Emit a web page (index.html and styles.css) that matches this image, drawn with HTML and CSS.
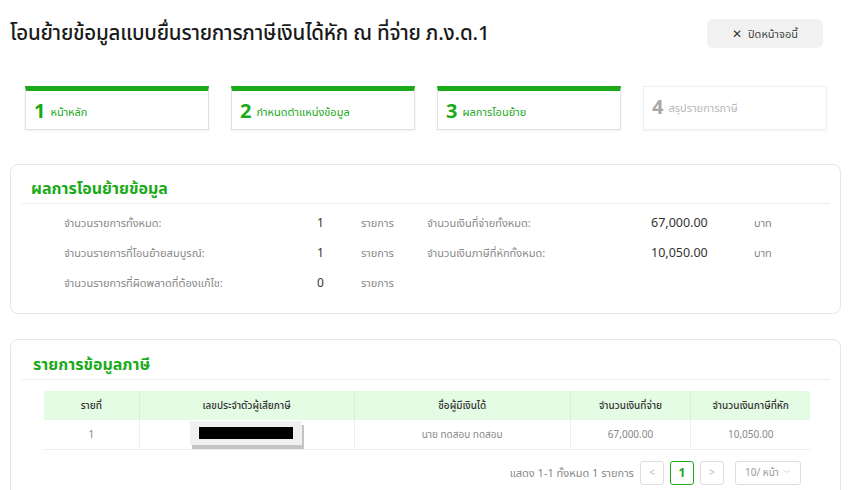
FILE: index.html
```html
<!DOCTYPE html>
<html lang="th">
<head>
    <meta charset="UTF-8">
    <title>โอนย้ายข้อมูล ภ.ง.ด.1</title>
    <link rel="stylesheet" href="styles.css">
</head>
<body>
    <div class="header">
        <h1>โอนย้ายข้อมูลแบบยื่นรายการภาษีเงินได้หัก ณ ที่จ่าย ภ.ง.ด.1</h1>
        <button class="close-btn"><span class="x">✕</span> ปิดหน้าจอนี้</button>
    </div>

    <div class="steps">
        <div class="step done"><span class="num">1</span> หน้าหลัก</div>
        <div class="step done"><span class="num">2</span> กำหนดตำแหน่งข้อมูล</div>
        <div class="step done"><span class="num">3</span> ผลการโอนย้าย</div>
        <div class="step"><span class="num">4</span> สรุปรายการภาษี</div>
    </div>

    <div class="panel">
        <h2>ผลการโอนย้ายข้อมูล</h2>
        <div class="summary">
            <span class="lbl">จำนวนรายการทั้งหมด:</span><span class="val">1</span><span class="unit">รายการ</span>
            <span class="lbl">จำนวนเงินที่จ่ายทั้งหมด:</span><span class="val money">67,000.00</span><span class="unit">บาท</span>

            <span class="lbl">จำนวนรายการที่โอนย้ายสมบูรณ์:</span><span class="val">1</span><span class="unit">รายการ</span>
            <span class="lbl">จำนวนเงินภาษีที่หักทั้งหมด:</span><span class="val money">10,050.00</span><span class="unit">บาท</span>

            <span class="lbl">จำนวนรายการที่ผิดพลาดที่ต้องแก้ไข:</span><span class="val">0</span><span class="unit">รายการ</span>
            <span></span><span></span><span></span>
        </div>
    </div>

    <div class="panel panel-list">
        <h2>รายการข้อมูลภาษี</h2>
        <table class="tax-table">
            <thead>
                <tr>
                    <th class="c1">รายที่</th>
                    <th class="c2">เลขประจำตัวผู้เสียภาษี</th>
                    <th class="c3">ชื่อผู้มีเงินได้</th>
                    <th class="c4">จำนวนเงินที่จ่าย</th>
                    <th class="c5">จำนวนเงินภาษีที่หัก</th>
                </tr>
            </thead>
            <tbody>
                <tr>
                    <td>1</td>
                    <td class="tax-id"><span class="redact"><span class="bar"></span></span></td>
                    <td>นาย ทดสอบ ทดสอบ</td>
                    <td>67,000.00</td>
                    <td>10,050.00</td>
                </tr>
            </tbody>
        </table>
        <div class="pager">
            <span class="pager-info">แสดง 1-1 ทั้งหมด 1 รายการ</span>
            <span class="pg">&lt;</span>
            <span class="pg active">1</span>
            <span class="pg">&gt;</span>
            <span class="page-size">10/ หน้า <span class="caret">﹀</span></span>
        </div>
    </div>
</body>
</html>
```

FILE: styles.css
```css
body {
    margin: 0;
    background-color: #fff;
    font-family: "Noto Sans Thai", "Noto Sans Thai Looped", "Noto Sans", "DejaVu Sans", sans-serif;
    color: #333;
    width: 852px;
    height: 490px;
    overflow: hidden;
}
.header {
    display: flex;
    align-items: center;
    justify-content: space-between;
    padding: 19px 29px 0 10px;
    height: 29px;
}
.header h1 {
    margin: 0;
    font-size: 20.5px;
    font-weight: 500;
    color: #1a1a1a;
    letter-spacing: -0.2px;
    line-height: 29px;
}
.close-btn {
    width: 116px;
    height: 29px;
    border: none;
    border-radius: 6px;
    background-color: #f1f1f1;
    color: #444;
    font-family: inherit;
    font-size: 11px;
    cursor: pointer;
}
.close-btn .x {
    font-weight: bold;
    font-size: 12px;
    margin-right: 3px;
    color: #333;
}
.steps {
    display: grid;
    grid-template-columns: repeat(4, 184px);
    gap: 22px;
    margin: 38px 0 0 25px;
}
.step {
    height: 44px;
    box-sizing: border-box;
    border: 1px solid #f0f0f0;
    box-shadow: 0 1px 2px rgba(0,0,0,0.06);
    display: flex;
    align-items: center;
    padding: 0 0 0 8px;
    font-size: 11px;
    color: #b8b8b8;
}
.step .num {
    font-size: 20px;
    font-weight: bold;
    margin-right: 5px;
    color: #a8a8a8;
}
.step.done {
    border-color: #e0e0e0;
    border-top: 5px solid #1aaa1a;
    padding-top: 4px;
    color: #1aaa1a;
}
.step.done .num {
    color: #1aaa1a;
}
.panel {
    margin: 34px 11px 0 10px;
    border: 1px solid #e6e6e6;
    border-radius: 8px;
    padding: 10px 10px 15px 10px;
}
.panel h2 {
    margin: 0;
    height: 28px;
    line-height: 28px;
    padding-left: 10px;
    font-size: 16px;
    font-weight: bold;
    color: #1aaa1a;
    border-bottom: 1px solid #eee;
}
.summary {
    display: grid;
    grid-template-columns: 253px 44px 66px 224px 103px 40px;
    grid-auto-rows: 30px;
    align-items: center;
    padding: 4px 0 0 43px;
    font-size: 11px;
    color: #888;
}
.summary .val {
    color: #333;
    font-size: 12px;
}
.summary .money {
    font-size: 12.5px;
}
.panel-list {
    margin-top: 25px;
    padding-top: 11px;
    padding-bottom: 30px;
}
.panel-list h2 {
    padding-left: 12px;
}
.tax-table {
    border-collapse: collapse;
    margin: 11px 0 0 23px;
    width: 766px;
    font-size: 10px;
    line-height: 14px;
}
.tax-table th {
    background-color: #e4fbe4;
    height: 29px;
    padding: 0;
    font-weight: 500;
    color: #333;
    border-right: 1px solid #d6f0d6;
}
.tax-table td {
    height: 29px;
    padding: 0;
    text-align: center;
    color: #888;
    border-right: 1px solid #eee;
    border-bottom: 1px solid #eee;
}
.tax-table th:last-child,
.tax-table td:last-child {
    border-right: none;
}
.c1 { width: 95px; }
.c2 { width: 215px; }
.c3 { width: 216px; }
.c4 { width: 120px; }
.c5 { width: 119px; }
.tax-id {
    position: relative;
}
.redact {
    position: absolute;
    left: 50px;
    top: 1px;
    width: 112px;
    height: 24px;
    background-color: #f0f0f0;
    box-shadow: 2px 4px 0 #c4c4c4;
    display: flex;
    align-items: center;
    justify-content: center;
}
.redact .bar {
    display: block;
    width: 94px;
    height: 12px;
    background-color: #000;
}
.pager {
    display: flex;
    justify-content: flex-end;
    align-items: center;
    gap: 6px;
    margin: 11px 29px 0 0;
    font-size: 11px;
    color: #888;
}
.pg {
    width: 22px;
    height: 22px;
    border: 1px solid #ddd;
    border-radius: 3px;
    display: flex;
    align-items: center;
    justify-content: center;
    color: #bbb;
    font-size: 10px;
}
.pg.active {
    border-color: #1aaa1a;
    color: #1aaa1a;
    font-size: 12px;
    font-weight: bold;
}
.page-size {
    margin-left: 5px;
    width: 66px;
    height: 24px;
    box-sizing: border-box;
    border: 1px solid #ddd;
    border-radius: 3px;
    display: flex;
    align-items: center;
    justify-content: center;
    font-size: 10px;
    color: #999;
}
.caret {
    font-size: 8px;
    margin-left: 4px;
    color: #bbb;
}
```
